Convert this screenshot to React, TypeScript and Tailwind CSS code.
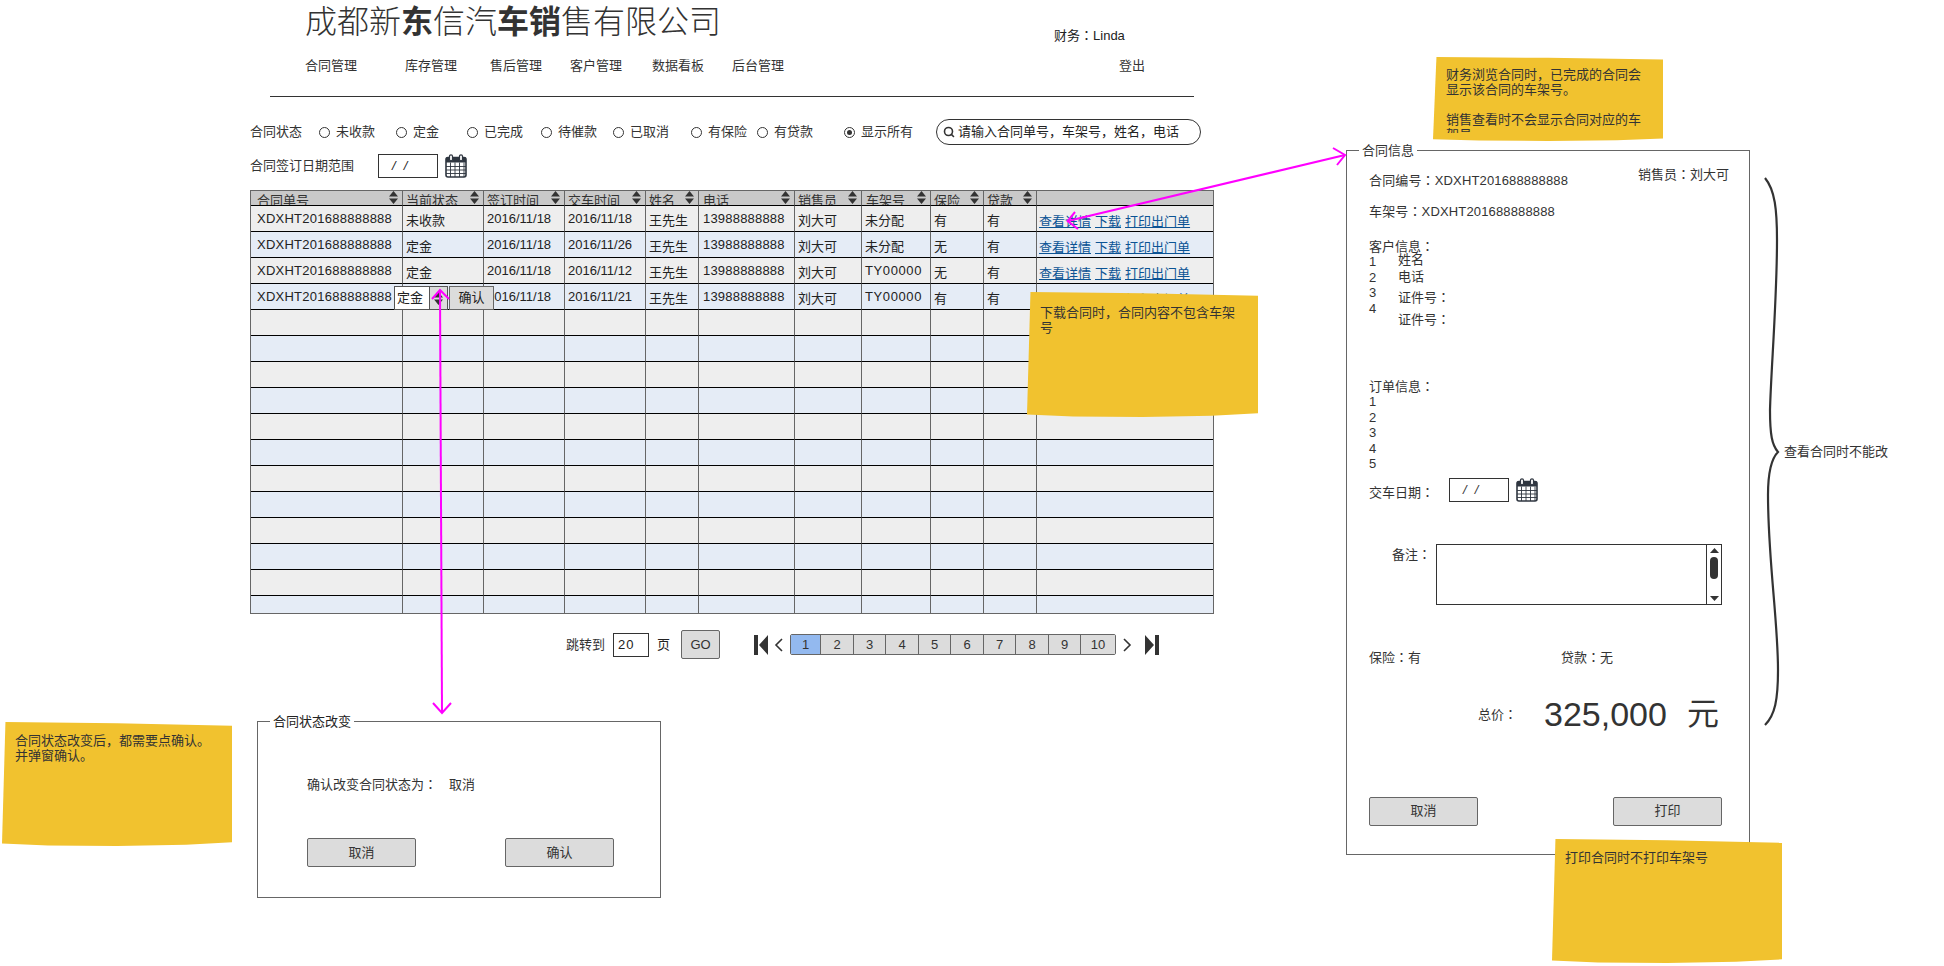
import React from "react";
import { Search } from "lucide-react";

const colW = ["w-[152px]", "w-[81px]", "w-[81px]", "w-[81px]", "w-[53px]", "w-[96px]", "w-[67px]", "w-[69px]", "w-[53px]", "w-[53px]", ""];
const headers = ["合同单号", "当前状态", "签订时间", "交车时间", "姓名", "电话", "销售员", "车架号", "保险", "贷款"];
const headPad = ["pl-[6px]", "pl-[3px]", "pl-[3px]", "pl-[3px]", "pl-[3px]", "pl-[4px]", "pl-[3px]", "pl-[4px]", "pl-[3px]", "pl-[3px]"];
const rows = [
  ["未收款", "2016/11/18", "未分配", "有", "有"],
  ["定金", "2016/11/26", "未分配", "无", "有"],
  ["定金", "2016/11/12", "TY00000", "无", "有"],
  ["定金", "2016/11/21", "TY00000", "有", "有"],
];
const statuses = ["未收款", "定金", "已完成", "待催款", "已取消", "有保险", "有贷款", "显示所有"];
const statusW = ["w-[77px]", "w-[71px]", "w-[74px]", "w-[72px]", "w-[78px]", "w-[66px]", "w-[87px]", "w-[92px]"];
const pageW = ["w-[30px]", "w-[33px]", "w-[32px]", "w-[33px]", "w-[32px]", "w-[33px]", "w-[32px]", "w-[33px]", "w-[32px]", "flex-1"];

function Colon() {
  return <span className="leading-none [font-family:'Noto_Sans_CJK_TC',sans-serif]">：</span>;
}

function SortIcon() {
  return (
    <svg width="9" height="13" viewBox="0 0 9 13" className="shrink-0">
      <path d="M4.5 0 L9 5.5 L0 5.5 Z M4.5 13 L0 7.5 L9 7.5 Z" fill="#333" />
    </svg>
  );
}

function Calendar() {
  return (
    <svg width="22" height="24" viewBox="0 0 22 24" className="shrink-0">
      <rect x="1" y="3.5" width="20" height="19.5" rx="2" fill="#fff" stroke="#2f3640" strokeWidth="1.6" />
      <rect x="1" y="3.5" width="20" height="5" fill="#2f3640" />
      <rect x="4.5" y="0.8" width="3" height="6" rx="1.5" fill="#fff" stroke="#2f3640" strokeWidth="1.2" />
      <rect x="14.5" y="0.8" width="3" height="6" rx="1.5" fill="#fff" stroke="#2f3640" strokeWidth="1.2" />
      <path d="M5.5 8.5V23M10 8.5V23M14.5 8.5V23M19 8.5V23M1 12.5H21M1 16H21M1 19.5H21" stroke="#2f3640" strokeWidth="0.9" fill="none" />
    </svg>
  );
}

function DateInput() {
  return (
    <div className="w-[60px] h-[24px] border border-[#333] bg-white flex items-center pl-[13px] gap-[8px] text-[13px] italic">
      <span>/</span>
      <span>/</span>
    </div>
  );
}

function Btn({ children, className = "" }: { children: React.ReactNode; className?: string }) {
  return (
    <div className={"h-[29px] bg-[#dcdcdc] border border-[#666] rounded-[2px] flex items-center justify-center text-[13px] text-[#333] " + className}>
      {children}
    </div>
  );
}

function Sticky({ className, children }: { className: string; children: React.ReactNode }) {
  return (
    <div className={"absolute bg-[#f1c22f] text-[13px] leading-[15px] text-[#333] [clip-path:polygon(1.5%_0,50%_1%,100%_3%,100%_97%,80%_99%,50%_100%,20%_99.5%,0_98%)] " + className}>
      {children}
    </div>
  );
}

export default function App() {
  return (
    <div className="relative w-[1944px] h-[966px] overflow-hidden bg-white text-[#222] text-[13px] [font-family:'Liberation_Sans','Noto_Sans_CJK_SC',sans-serif]">
      {/* main screen */}
      <div className="absolute left-[250px] top-0 w-[964px]">
        <div className="flex h-[44px]">
          <div className="w-[804px] pl-[55px] text-[32px] leading-[44px] font-light text-[#333]">
            成都新<b className="font-bold">东</b>信汽<b className="font-bold">车销</b>售有限公司
          </div>
          <div className="pt-[27px] leading-[18px]">财务<Colon />Linda</div>
        </div>
        <div className="flex h-[44px] pl-[55px] pt-[13px] leading-[18px] text-[#333]">
          <div className="w-[100px]">合同管理</div>
          <div className="w-[85px]">库存管理</div>
          <div className="w-[80px]">售后管理</div>
          <div className="w-[82px]">客户管理</div>
          <div className="w-[80px]">数据看板</div>
          <div className="w-[387px]">后台管理</div>
          <div>登出</div>
        </div>
        <div className="ml-[20px] w-[924px] h-px bg-[#333] mt-[8px]" />
        <div className="flex items-center h-[26px] mt-[22px]">
          <div className="w-[69px] text-[#333]">合同状态</div>
          {statuses.map((s, i) => (
            <div key={s} className={"flex items-center gap-[6px] " + statusW[i]}>
              <span className="w-[11px] h-[11px] rounded-full border border-[#333] bg-white flex items-center justify-center shrink-0">
                {i === 7 && <span className="w-[5px] h-[5px] rounded-full bg-[#333]" />}
              </span>
              <span className="text-[#333] whitespace-nowrap">{s}</span>
            </div>
          ))}
          <div className="w-[265px] h-[26px] border border-[#333] rounded-[13px] flex items-center pl-[6px] gap-[3px] whitespace-nowrap">
            <Search size={12} strokeWidth={3.2} className="text-[#333] shrink-0" />
            <span>请输入合同单号，车架号，姓名，电话</span>
          </div>
        </div>
        <div className="flex items-center h-[24px] mt-[9px]">
          <div className="w-[128px] text-[#333]">合同签订日期范围</div>
          <DateInput />
          <div className="ml-[7px]">
            <Calendar />
          </div>
        </div>
        <div className="relative mt-[12px] w-[964px] h-[424px] border border-[#666] overflow-hidden">
          <table className="table-fixed w-[962px] border-separate border-spacing-0">
            <colgroup>
              {colW.map((c, i) => (
                <col key={i} className={c} />
              ))}
            </colgroup>
            <thead>
              <tr>
                {headers.map((h, i) => (
                  <th key={h} className="p-0 font-normal text-left bg-[#c9c9c9] border-r border-b border-r-[#666] border-b-black">
                    <div className={"h-[14px] overflow-hidden flex justify-between pr-[4px] leading-[19px] text-[#333] " + headPad[i]}>
                      <span>{h}</span>
                      <SortIcon />
                    </div>
                  </th>
                ))}
                <th className="p-0 bg-[#c9c9c9] border-b border-b-black" />
              </tr>
            </thead>
            <tbody>
              {Array.from({ length: 16 }).map((_, r) => {
                const d = rows[r];
                const bg = r % 2 === 0 ? "bg-[#eeeeee]" : "bg-[#e5ecf6]";
                const cell = "p-0 border-r border-b border-r-[#666] border-b-black " + bg;
                const inner = "h-[25px] leading-[25px] whitespace-nowrap overflow-hidden ";
                const cjk = "h-[25px] leading-[29px] whitespace-nowrap overflow-hidden ";
                return (
                  <tr key={r}>
                    <td className={cell}><div className={inner + "pl-[6px] tracking-[0.25px]"}>{d && "XDXHT201688888888"}</div></td>
                    <td className={cell}><div className={cjk + "pl-[3px]"}>{d && d[0]}</div></td>
                    <td className={cell}><div className={inner + "pl-[3px]"}>{d && "2016/11/18"}</div></td>
                    <td className={cell}><div className={inner + "pl-[3px]"}>{d && d[1]}</div></td>
                    <td className={cell}><div className={cjk + "pl-[3px]"}>{d && "王先生"}</div></td>
                    <td className={cell}><div className={inner + "pl-[4px] tracking-[0.2px]"}>{d && "13988888888"}</div></td>
                    <td className={cell}><div className={cjk + "pl-[3px]"}>{d && "刘大可"}</div></td>
                    <td className={cell}><div className={(d && d[2].startsWith("T") ? inner + "tracking-[0.6px] " : cjk) + "pl-[3px]"}>{d && d[2]}</div></td>
                    <td className={cell}><div className={cjk + "pl-[3px]"}>{d && d[3]}</div></td>
                    <td className={cell}><div className={cjk + "pl-[3px]"}>{d && d[4]}</div></td>
                    <td className={"p-0 border-b border-b-black " + bg}>
                      <div className="h-[25px] leading-[31px] pl-[2px] flex gap-[4px] text-[#0b5394] underline whitespace-nowrap overflow-hidden">
                        {d && (
                          <>
                            <span>查看详情</span>
                            <span>下载</span>
                            <span>打印出门单</span>
                          </>
                        )}
                      </div>
                    </td>
                  </tr>
                );
              })}
            </tbody>
          </table>
          {/* inline status editor */}
          <div className="absolute left-[143px] top-[95px] flex h-[24px]">
            <div className="w-[36px] bg-white border border-[#555] flex items-center pl-[2px]">定金</div>
            <div className="w-[18px] bg-[#dcdcdc] border-y border-r border-[#555] flex items-center justify-center">
              <svg width="9" height="13" viewBox="0 0 9 13">
                <path d="M4.5 0 L9 5.5 L0 5.5 Z M4.5 13 L0 7.5 L9 7.5 Z" fill="#333" />
              </svg>
            </div>
            <div className="w-[45px] bg-[#dcdcdc] border border-[#666] ml-px flex items-center justify-center">确认</div>
          </div>
        </div>
        <div className="flex items-center h-[29px] mt-[16px] pl-[316px]">
          <div className="w-[47px] text-[#333]">跳转到</div>
          <div className="w-[36px] h-[24px] border border-[#333] flex items-center pl-[4px] tracking-[1px]">20</div>
          <div className="w-[32px] pl-[8px]">页</div>
          <Btn className="w-[39px]">GO</Btn>
          <svg width="14" height="20" viewBox="0 0 14 20" className="ml-[34px] shrink-0">
            <path d="M0 0H4V20H0Z M14 0 L5 10 L14 20 Z" fill="#333" />
          </svg>
          <svg width="9" height="14" viewBox="0 0 9 14" className="ml-[6px] shrink-0">
            <path d="M8 1 L2 7 L8 13" fill="none" stroke="#333" strokeWidth="1.6" />
          </svg>
          <div className="ml-[7px] w-[326px] h-[21px] flex border border-[#666] rounded-[2px] overflow-hidden">
            {pageW.map((w, i) => (
              <div key={i} className={"flex items-center justify-center text-[#333] border-[#666] " + w + (i < 9 ? " border-r" : "") + (i === 0 ? " bg-[#93b9ef]" : " bg-[#dcdcdc]")}>
                {i + 1}
              </div>
            ))}
          </div>
          <svg width="9" height="14" viewBox="0 0 9 14" className="ml-[7px] shrink-0">
            <path d="M1 1 L7 7 L1 13" fill="none" stroke="#333" strokeWidth="1.6" />
          </svg>
          <svg width="14" height="20" viewBox="0 0 14 20" className="ml-[13px] shrink-0">
            <path d="M14 0H10V20H14Z M0 0 L9 10 L0 20 Z" fill="#333" />
          </svg>
        </div>
      </div>

      {/* status change dialog */}
      <div className="absolute left-[257px] top-[721px] w-[404px] h-[177px] border border-[#666] pl-[49px] pr-[46px]">
        <span className="absolute left-[12px] -top-[9px] bg-white px-[3px] leading-[18px]">合同状态改变</span>
        <div className="flex h-[16px] mt-[55px] leading-[16px] text-[#333]">
          <div className="w-[142px]">确认改变合同状态为<Colon /></div>
          <div>取消</div>
        </div>
        <div className="flex justify-between mt-[45px]">
          <Btn className="w-[109px]">取消</Btn>
          <Btn className="w-[109px]">确认</Btn>
        </div>
      </div>

      {/* contract panel */}
      <div className="absolute left-[1346px] top-[150px] w-[404px] h-[705px] border border-[#666] pl-[22px] pr-[27px] pt-[16px] leading-[16px] text-[#333]">
        <span className="absolute left-[12px] -top-[9px] bg-white px-[3px] leading-[18px]">合同信息</span>
        <div className="flex justify-between h-[37px]">
          <div className="mt-[6px] tracking-[0.15px]">合同编号<Colon />XDXHT201688888888</div>
          <div className="-mr-[7px]">销售员<Colon />刘大可</div>
        </div>
        <div className="h-[16px] tracking-[0.15px]">车架号<Colon />XDXHT201688888888</div>
        <div className="h-[16px] mt-[19px]">客户信息<Colon /></div>
        <div className="flex h-[76px] -mt-[3px]">
          <div className="w-[29px] pt-[2px] leading-[15.7px]">
            <div>1</div>
            <div>2</div>
            <div>3</div>
            <div>4</div>
          </div>
          <div>
            <div className="h-[17px]">姓名</div>
            <div className="h-[21px]">电话</div>
            <div className="h-[22px]">证件号<Colon /></div>
            <div className="h-[16px]">证件号<Colon /></div>
          </div>
        </div>
        <div className="h-[16px] mt-[51px]">订单信息<Colon /></div>
        <div className="-mt-px leading-[15.6px]">
          <div>1</div>
          <div>2</div>
          <div>3</div>
          <div>4</div>
          <div>5</div>
        </div>
        <div className="flex items-center h-[24px] mt-[6px]">
          <div className="w-[80px] pt-[6px]">交车日期<Colon /></div>
          <DateInput />
          <div className="ml-[7px]">
            <Calendar />
          </div>
        </div>
        <div className="flex mt-[42px]">
          <div className="w-[67px] pl-[23px] pt-[3px] whitespace-nowrap">备注<Colon /></div>
          <div className="w-[287px] h-[61px] border border-[#333] flex justify-end">
            <div className="w-[15px] h-full border-l border-[#333] flex flex-col items-center justify-between py-[3px]">
              <svg width="9" height="5" viewBox="0 0 9 5"><path d="M4.5 0L9 5H0Z" fill="#333" /></svg>
              <div className="w-[8px] h-[22px] rounded-[4px] bg-[#333] -mt-[12px]" />
              <svg width="9" height="5" viewBox="0 0 9 5"><path d="M4.5 5L0 0H9Z" fill="#333" /></svg>
            </div>
          </div>
        </div>
        <div className="flex h-[16px] mt-[45px]">
          <div className="w-[192px]">保险<Colon />有</div>
          <div>贷款<Colon />无</div>
        </div>
        <div className="flex items-center h-[38px] mt-[29px]">
          <div className="w-[175px] pl-[109px] pt-[3px]">总价<Colon /></div>
          <div className="w-[143px] text-[34px] leading-[38px]">325,000</div>
          <div className="text-[32px] leading-[38px]">元</div>
        </div>
        <div className="flex justify-between mt-[64px]">
          <Btn className="w-[109px]">取消</Btn>
          <Btn className="w-[109px]">打印</Btn>
        </div>
      </div>
      <div className="absolute left-[1784px] top-[444px] leading-[16px] text-[#333]">查看合同时不能改</div>

      {/* sticky notes */}
      <Sticky className="left-[2px] top-[722px] w-[230px] h-[124px] pl-[13px] pr-[10px] pt-[11px]">
        合同状态改变后，都需要点确认。<br />并弹窗确认。
      </Sticky>
      <Sticky className="left-[1027px] top-[292px] w-[231px] h-[125px] pl-[13px] pr-[22px] pt-[13px]">
        下载合同时，合同内容不包含车架号
      </Sticky>
      <Sticky className="left-[1433px] top-[57px] w-[230px] h-[84px] pl-[13px] pr-[22px] pt-[10px]">
        <div className="h-[66px] overflow-hidden">
          财务浏览合同时，已完成的合同会显示该合同的车架号。<br /><br />销售查看时不会显示合同对应的车架号
        </div>
      </Sticky>
      <Sticky className="left-[1552px] top-[839px] w-[230px] h-[124px] pl-[13px] pr-[10px] pt-[11px]">
        打印合同时不打印车架号
      </Sticky>

      {/* connectors and brace */}
      <svg className="absolute inset-0 pointer-events-none" width="1944" height="966" viewBox="0 0 1944 966">
        <g fill="none" stroke="#ff00ff" strokeWidth="2">
          <path d="M1067.7 221 L1345 155" />
          <path d="M1333 148 L1345 155 L1337 165" />
          <path d="M1075 212 L1067.7 221 L1078 229" />
          <path d="M440 290 L442 713" />
          <path d="M432 299 L440 290 L449 299" />
          <path d="M433 703 L442 713 L451 703" />
        </g>
        <path
          d="M1765 178 C1775 190 1777 210 1777 240 C1777 300 1771 370 1770 410 C1770 435 1772 445 1778 452 C1772 458 1768 470 1768 495 C1768 560 1778 620 1778 670 C1778 700 1775 715 1765 725"
          fill="none"
          stroke="#333"
          strokeWidth="2.2"
        />
      </svg>
    </div>
  );
}
